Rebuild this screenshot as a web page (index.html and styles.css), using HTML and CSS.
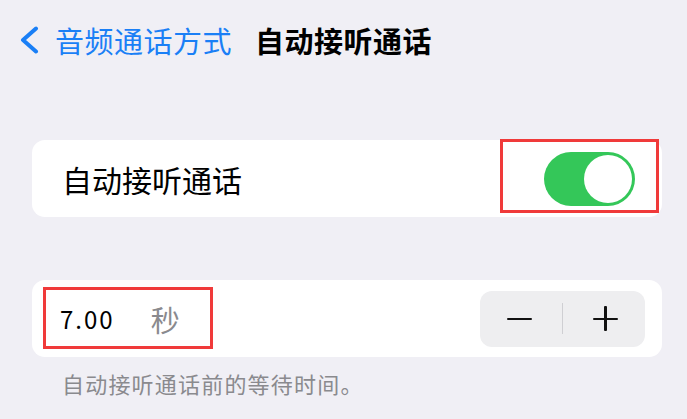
FILE: index.html
```html
<!DOCTYPE html>
<html lang="zh">
<head>
<meta charset="utf-8">
<link rel="stylesheet" href="styles.css">
</head>
<body>
<div class="page">
  <header class="nav">
    <span class="back">
      <svg class="chev" width="20" height="28" viewBox="0 0 20 28"><path d="M17 2.5 L4 14 L17 25.5" fill="none" stroke="#1a7ff6" stroke-width="4" stroke-linecap="round" stroke-linejoin="round"/></svg>
      <span class="back-label">音频通话方式</span>
    </span>
    <span class="title">自动接听通话</span>
  </header>

  <section class="card card-toggle">
    <span class="label">自动接听通话</span>
    <span class="toggle"><span class="knob"></span></span>
    <span class="mark mark-toggle"></span>
  </section>

  <section class="card card-stepper">
    <span class="value">7.00</span>
    <span class="unit">秒</span>
    <span class="stepper">
      <span class="step minus"></span>
      <span class="divider"></span>
      <span class="step plus"></span>
    </span>
    <span class="mark mark-value"></span>
  </section>
  <p class="footnote">自动接听通话前的等待时间。</p>
</div>
</body>
</html>
```

FILE: styles.css
```css
html, body {
  margin: 0;
  padding: 0;
  background: #f0eff5;
}
body {
  font-family: "Noto Sans CJK SC", "Noto Sans", sans-serif;
  width: 687px;
  height: 419px;
  overflow: hidden;
}
.page {
  padding: 0 25px 0 32px;
}
.nav {
  height: 80px;
  display: flex;
  align-items: center;
  margin-left: -13px;
}
.back {
  display: flex;
  align-items: center;
  color: #1a7ff6;
}
.chev {
  display: block;
  margin-right: 16px;
}
.back-label, .title {
  font-size: 29px;
  line-height: 34px;
  letter-spacing: 0.5px;
}
.title {
  margin-left: 23px;
  font-weight: 700;
  color: #000;
}
.card {
  position: relative;
  background: #fff;
  border-radius: 13px;
  height: 77px;
  display: flex;
  align-items: center;
}
.card-toggle {
  margin-top: 60px;
  padding: 0 27px 0 30px;
  justify-content: space-between;
}
.label {
  font-size: 30px;
  color: #000;
}
.toggle {
  position: relative;
  width: 91px;
  height: 54px;
  border-radius: 27px;
  background: #34c759;
}
.knob {
  position: absolute;
  right: 3px;
  top: 3px;
  width: 48px;
  height: 48px;
  border-radius: 50%;
  background: #fff;
}
.mark {
  position: absolute;
  border: 3px solid #f03a3a;
  box-sizing: border-box;
}
.mark-toggle {
  left: 468px;
  top: -1px;
  width: 159px;
  height: 74px;
}
.card-stepper {
  margin-top: 63px;
  padding: 0 17px 0 28px;
}
.value {
  font-size: 24px;
  color: #000;
  letter-spacing: 2px;
}
.unit {
  font-size: 29px;
  color: #8a8a8e;
  margin-left: 36px;
}
.stepper {
  margin-left: auto;
  width: 165px;
  height: 56px;
  border-radius: 12px;
  background: #eeeef0;
  display: flex;
  align-items: center;
  justify-content: center;
  gap: 30px;
}
.step {
  position: relative;
  width: 25px;
  height: 25px;
}
.step::before {
  content: "";
  position: absolute;
  left: 0;
  right: 0;
  top: 11.5px;
  height: 2.5px;
  background: #111;
  border-radius: 1px;
}
.plus::after {
  content: "";
  position: absolute;
  top: 0;
  bottom: 0;
  left: 11.25px;
  width: 2.5px;
  background: #111;
  border-radius: 1px;
}
.divider {
  width: 1px;
  height: 31px;
  background: #cfcfd3;
}
.mark-value {
  left: 11px;
  top: 7px;
  width: 170px;
  height: 62px;
}
.footnote {
  margin: 12px 0 0 30px;
  font-size: 22px;
  line-height: 28px;
  letter-spacing: 1.2px;
  color: #8a8a8e;
}
```
